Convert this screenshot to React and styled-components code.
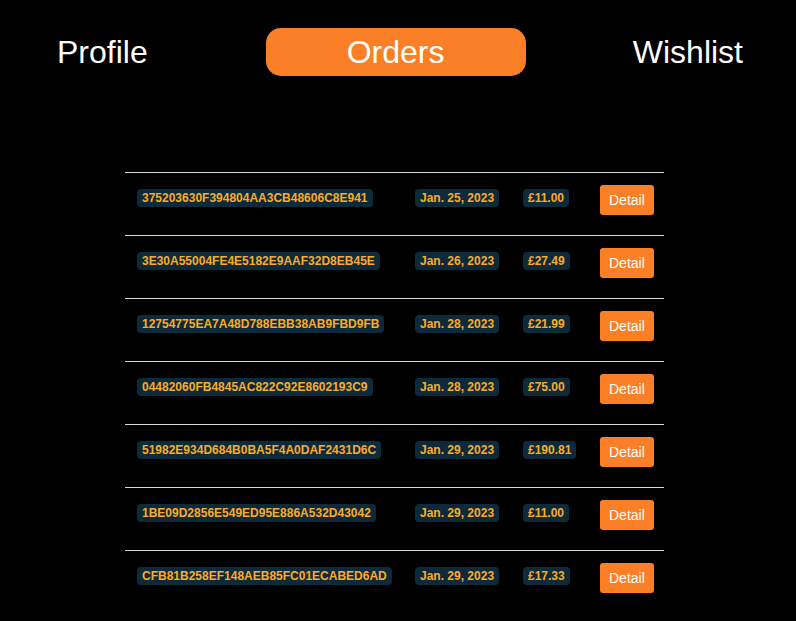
import React from 'react';
import styled, { createGlobalStyle } from 'styled-components';

const GlobalStyle = createGlobalStyle`
  html, body {
    margin: 0;
    padding: 0;
    background: #000;
  }
  body {
    font-family: "Liberation Sans", Arial, sans-serif;
    color: #fff;
  }
`

const Page = styled.div`
  min-height: 621px;
  padding-top: 28px;
  box-sizing: border-box;
  background: #000;
`

const Nav = styled.nav`
  display: flex;
  align-items: center;
  height: 48px;
  padding: 0 53px 0 57px;
`

const NavItem = styled.a`
  display: block;
  font-size: 32px;
  line-height: 48px;
  color: #fff;
  text-decoration: none;
  white-space: nowrap;
  ${props => props.active && `
    background: #fa7f26;
    border-radius: 15px;
    padding: 0 81px;
    margin-left: 118px;
  `}
  ${props => props.last && `
    margin-left: auto;
  `}
`

const OrdersTable = styled.div`
  width: 539px;
  margin: 96px 0 0 125px;
`

const Row = styled.div`
  display: grid;
  grid-template-columns: 278px 108px 77px 76px;
  align-items: start;
  border-top: 1px solid #d9d9d9;
  padding: 12px 0;
`

const Cell = styled.div`
  padding: 0 12px;
`

const Badge = styled.span`
  display: inline-block;
  margin-top: 4px;
  padding: 2px 5px;
  font-size: 12px;
  line-height: 14px;
  font-weight: bold;
  color: #fbab26;
  background: #0c2a3a;
  border-radius: 4px;
  white-space: nowrap;
`

const DetailButton = styled.button`
  display: block;
  height: 30px;
  margin-bottom: 8px;
  padding: 0 9px;
  border: none;
  border-radius: 3px;
  background: #fa7f26;
  color: #fff;
  font-family: inherit;
  font-size: 14px;
  cursor: pointer;
`

const orders = [
  { id: '375203630F394804AA3CB48606C8E941', date: 'Jan. 25, 2023', total: '£11.00' },
  { id: '3E30A55004FE4E5182E9AAF32D8EB45E', date: 'Jan. 26, 2023', total: '£27.49' },
  { id: '12754775EA7A48D788EBB38AB9FBD9FB', date: 'Jan. 28, 2023', total: '£21.99' },
  { id: '04482060FB4845AC822C92E8602193C9', date: 'Jan. 28, 2023', total: '£75.00' },
  { id: '51982E934D684B0BA5F4A0DAF2431D6C', date: 'Jan. 29, 2023', total: '£190.81' },
  { id: '1BE09D2856E549ED95E886A532D43042', date: 'Jan. 29, 2023', total: '£11.00' },
  { id: 'CFB81B258EF148AEB85FC01ECABED6AD', date: 'Jan. 29, 2023', total: '£17.33' },
];

const App = () => {
  return (
    <React.Fragment>
      <GlobalStyle />
      <Page>
        <Nav>
          <NavItem href='#profile'>Profile</NavItem>
          <NavItem href='#orders' active>Orders</NavItem>
          <NavItem href='#wishlist' last>Wishlist</NavItem>
        </Nav>
        <OrdersTable>
          {orders.map(order => (
            <Row key={order.id}>
              <Cell><Badge>{order.id}</Badge></Cell>
              <Cell><Badge>{order.date}</Badge></Cell>
              <Cell><Badge>{order.total}</Badge></Cell>
              <Cell><DetailButton>Detail</DetailButton></Cell>
            </Row>
          ))}
        </OrdersTable>
      </Page>
    </React.Fragment>
  );
};

export default App;
